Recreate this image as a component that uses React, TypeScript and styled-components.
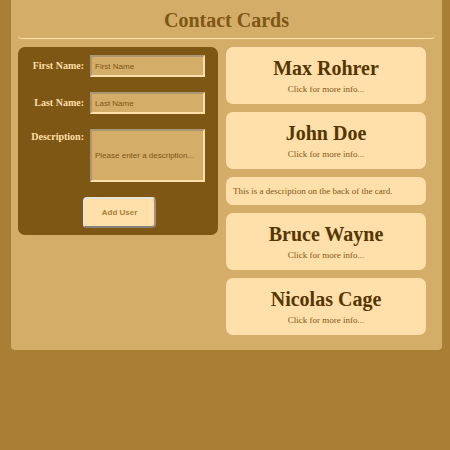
import React from "react";
import styled, { createGlobalStyle } from "styled-components";

const GlobalStyle = createGlobalStyle`
  * { box-sizing: border-box; }
  body {
    margin: 0;
    background: #a97e35;
    font-family: "Liberation Serif", "Times New Roman", serif;
  }
`;

const Panel = styled.main`
  margin: 0 8px 0 11px;
  padding: 0 7px 15px;
  background: #d4ad69;
  border-radius: 0 0 4px 4px;
`;

const Header = styled.header`
  padding: 6px 0 4px;
  border-bottom: 1px solid #ffdfaa;
  border-radius: 4px;
  text-align: center;
`;

const Title = styled.h1`
  margin: 0;
  font-size: 20px;
  line-height: 28px;
  color: #7f5714;
`;

const Content = styled.div`
  display: grid;
  grid-template-columns: 1fr 1fr;
  gap: 8px;
  align-items: start;
  padding: 8px 9px 0 0;
`;

const Form = styled.form`
  display: flex;
  flex-direction: column;
  gap: 15px;
  padding: 8px 13px 7px 16px;
  background: #7f5714;
  border-radius: 7px;
`;

const Field = styled.div`
  display: grid;
  grid-template-columns: 50px 1fr;
  column-gap: 6px;
  align-items: start;
`;

const Label = styled.label<{ $tall?: boolean }>`
  display: flex;
  justify-content: flex-end;
  font-size: 10px;
  font-weight: bold;
  line-height: ${({ $tall }) => ($tall ? 16 : 22)}px;
  white-space: nowrap;
  color: #ffdfaa;
`;

const Input = styled.input`
  width: 100%;
  height: 22px;
  padding: 0 3px;
  border: 2px inset #ffdfaa;
  border-radius: 0;
  background: #d4ad69;
  color: #7f5714;
  font: 8px "Liberation Sans", Arial, sans-serif;

  &::placeholder {
    color: #7f5714;
    opacity: 1;
  }
`;

const TextArea = styled(Input)`
  display: block;
  height: 53px;
  padding: 19px 0 19px 3px;
  line-height: 11px;
  resize: none;
  overflow: hidden;
  white-space: nowrap;
`;

const SubmitButton = styled.button`
  align-self: center;
  padding: 8px 17px;
  border: 2px solid;
  border-color: #e9e4da #9b9184 #84817b #e9e4da;
  border-radius: 4px;
  background: #ffdfaa;
  color: #a97e35;
  font: bold 8px/11px "Liberation Sans", Arial, sans-serif;
`;

const CardList = styled.section`
  display: flex;
  flex-direction: column;
  gap: 8px;
`;

const Card = styled.article<{ $back?: boolean }>`
  padding: ${({ $back }) => ($back ? "7px" : "8px 7px")};
  border-radius: 7px;
  background: #ffdfaa;
  color: #7f5714;
  text-align: ${({ $back }) => ($back ? "left" : "center")};
`;

const Name = styled.h2`
  margin: 0;
  font-size: 20px;
  line-height: 27px;
  color: #553600;
`;

const Text = styled.p`
  margin: 0;
  font-size: 9px;
  line-height: 14px;
`;

type Contact = { name: string; description?: string };

const contacts: Contact[] = [
  { name: "Max Rohrer" },
  { name: "John Doe" },
  { name: "", description: "This is a description on the back of the card." },
  { name: "Bruce Wayne" },
  { name: "Nicolas Cage" },
];

export default function App() {
  return (
    <>
      <GlobalStyle />
      <Panel>
        <Header>
          <Title>Contact Cards</Title>
        </Header>
        <Content>
          <Form onSubmit={(event) => event.preventDefault()}>
            <Field>
              <Label htmlFor="first-name">First Name:</Label>
              <Input id="first-name" type="text" placeholder="First Name" />
            </Field>
            <Field>
              <Label htmlFor="last-name">Last Name:</Label>
              <Input id="last-name" type="text" placeholder="Last Name" />
            </Field>
            <Field>
              <Label htmlFor="description" $tall>Description:</Label>
              <TextArea as="textarea" id="description" placeholder="Please enter a description..." />
            </Field>
            <SubmitButton type="submit">Add User</SubmitButton>
          </Form>
          <CardList>
            {contacts.map(({ name, description }, index) =>
              description ? (
                <Card key={index} $back>
                  <Text>{description}</Text>
                </Card>
              ) : (
                <Card key={index}>
                  <Name>{name}</Name>
                  <Text>Click for more info...</Text>
                </Card>
              ),
            )}
          </CardList>
        </Content>
      </Panel>
    </>
  );
}
